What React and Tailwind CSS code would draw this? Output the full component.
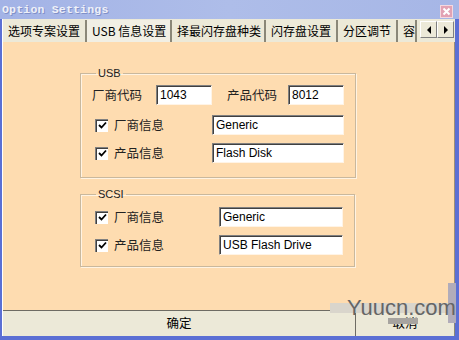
import React from "react";

const cjk = { fontFamily: '"Noto Sans CJK SC", "Liberation Sans", sans-serif' };
const latin = { fontFamily: '"Liberation Sans", "Noto Sans CJK SC", sans-serif' };

function TextBox({ value, className }) {
  return (
    <div
      className={`h-[20px] bg-white border-t border-l border-t-[#808080] border-l-[#808080] border-b border-r border-b-[#fff4e6] border-r-[#fff4e6] shadow-[inset_1px_1px_0_#404040] pl-[3px] flex items-center text-[12px] text-black ${className}`}
      style={latin}
    >
      {value}
    </div>
  );
}

function Check({ label }) {
  return (
    <div className="flex items-center gap-[6px]">
      <div className="w-[13px] h-[13px] bg-white border-t border-l border-[#808080] border-b-white border-r-white shadow-[inset_1px_1px_0_#404040] flex items-center justify-center">
        <svg width="9" height="9" viewBox="0 0 9 9">
          <path d="M1 4 L3.5 6.5 L8 1.5" stroke="#000" strokeWidth="1.8" fill="none" />
        </svg>
      </div>
      <span className="text-[12.5px] text-[#222]" style={cjk}>{label}</span>
    </div>
  );
}

function Group({ title, children, className }) {
  return (
    <fieldset className={`border border-[#c9b89d] shadow-[1px_1px_0_#fff3e2,inset_1px_1px_0_#fff3e2] w-[275px] px-[11px] ${className}`}>
      <legend className="ml-[4px] px-[2px] text-[11px] leading-[12px] text-[#222]" style={latin}>{title}</legend>
      {children}
    </fieldset>
  );
}

const tabs = [
  { label: "选项专案设置", w: "w-[84px]" },
  { label: "USB 信息设置", w: "w-[85px]", active: true },
  { label: "择最闪存盘种类", w: "w-[94px]" },
  { label: "闪存盘设置", w: "w-[72px]" },
  { label: "分区调节", w: "w-[60px]" },
  { label: "容", w: "w-[19px]" },
];

export default function App() {
  return (
    <div className="relative w-[459px] h-[340px] bg-[#5b6fd4] flex flex-col pl-[2px] pr-[4px] pb-[4px] overflow-hidden">
      {/* title bar */}
      <div className="-ml-[2px] -mr-[4px] h-[19px] bg-gradient-to-r from-[#a3b3e6] via-[#aebde9] to-[#a6b6e6] flex items-center justify-between pl-[2px] pr-[6px]">
        <span
          className="text-[11.5px] font-bold text-[#eef0f8] tracking-[0.2px] [text-shadow:1px_1px_0_#8090c8]"
          style={{ fontFamily: '"Liberation Mono", "DejaVu Sans Mono", monospace' }}
        >
          Option Settings
        </span>
        <div className="w-[13px] h-[13px] mt-[4px] bg-[#e2a2b4] border border-[#f4d8e0] flex items-center justify-center">
          <svg width="9" height="9" viewBox="0 0 9 9">
            <path d="M1.5 1.5 L7.5 7.5 M7.5 1.5 L1.5 7.5" stroke="#fff" strokeWidth="2" />
          </svg>
        </div>
      </div>

      <div className="flex-1 flex flex-col bg-[#ece9d8] border-l border-white">
        {/* tabs */}
        <div className="h-[23px] flex items-end">
          {tabs.map((t) => (
            <div
              key={t.label}
              className={`${t.w} h-[22px] flex items-center pl-[5px] border-r-2 border-r-[#8a8778] text-[12px] text-black overflow-hidden whitespace-nowrap ${
                t.active ? "bg-[#f1efe4]" : "bg-[#ece9d8]"
              }`}
              style={cjk}
            >
              {t.label}
            </div>
          ))}
          <div className="flex ml-auto mb-[4px] mr-[1px]">
            <div className="w-[17px] h-[17px] bg-[#ece9d8] border border-white border-r-[#808080] border-b-[#808080] flex items-center justify-center">
              <svg width="6" height="8" viewBox="0 0 6 8"><path d="M5 0 L1 4 L5 8 Z" fill="#000" /></svg>
            </div>
            <div className="w-[17px] h-[17px] bg-[#ece9d8] border border-white border-r-[#808080] border-b-[#808080] flex items-center justify-center">
              <svg width="6" height="8" viewBox="0 0 6 8"><path d="M1 0 L5 4 L1 8 Z" fill="#000" /></svg>
            </div>
          </div>
        </div>

        {/* panel */}
        <div className="h-[268px] bg-[#fedcb0] border-r border-r-[#9c8e78] pl-[77px] pt-[25px]">
          <Group title="USB" className="h-[111px] pt-[6px]">
            <div className="flex items-center h-[20px]">
              <span className="text-[12.5px] text-[#222] w-[64px]" style={cjk}>厂商代码</span>
              <TextBox value="1043" className="w-[56px]" />
              <span className="text-[12.5px] text-[#222] ml-[15px] w-[61px]" style={cjk}>产品代码</span>
              <TextBox value="8012" className="w-[56px]" />
            </div>
            <div className="flex items-center justify-between h-[20px] mt-[10px] pl-[3px]">
              <Check label="厂商信息" />
              <TextBox value="Generic" className="w-[132px]" />
            </div>
            <div className="flex items-center justify-between h-[20px] mt-[8px] pl-[3px]">
              <Check label="产品信息" />
              <TextBox value="Flash Disk" className="w-[132px]" />
            </div>
          </Group>

          <Group title="SCSI" className="h-[79px] mt-[10px] pt-[7px]">
            <div className="flex items-center justify-between h-[20px] pl-[3px]">
              <Check label="厂商信息" />
              <TextBox value="Generic" className="w-[124px]" />
            </div>
            <div className="flex items-center justify-between h-[20px] mt-[8px] pl-[3px]">
              <Check label="产品信息" />
              <TextBox value="USB Flash Drive" className="w-[124px]" />
            </div>
          </Group>
        </div>

        {/* buttons */}
        <div className="flex-1 flex border-t border-t-[#6e6c64]">
          <div className="w-[353px] flex items-center justify-center text-[12.5px] text-black border-r border-r-[#6e6c64]" style={cjk}>
            确定
          </div>
          <div className="flex-1 flex items-center justify-center text-[12.5px] text-black border-r border-r-[#8a8778]" style={cjk}>
            取消
          </div>
        </div>
      </div>

      {/* watermark overlay */}
      <div className="absolute left-[330px] top-[303px] w-[119px] h-[10px] bg-[#d9d5cc]" />
      <div className="absolute left-[388px] top-[318px] w-[30px] h-[6px] bg-[#a7a4a0]" />
      <div className="absolute left-[448px] top-[283px] w-[8px] h-[40px] bg-[#b1acba]" />
      <div
        className="absolute left-[347px] top-[296px] text-[22px] leading-[24px] text-[#656565]"
        style={latin}
      >
        Yuucn.com
      </div>
    </div>
  );
}
